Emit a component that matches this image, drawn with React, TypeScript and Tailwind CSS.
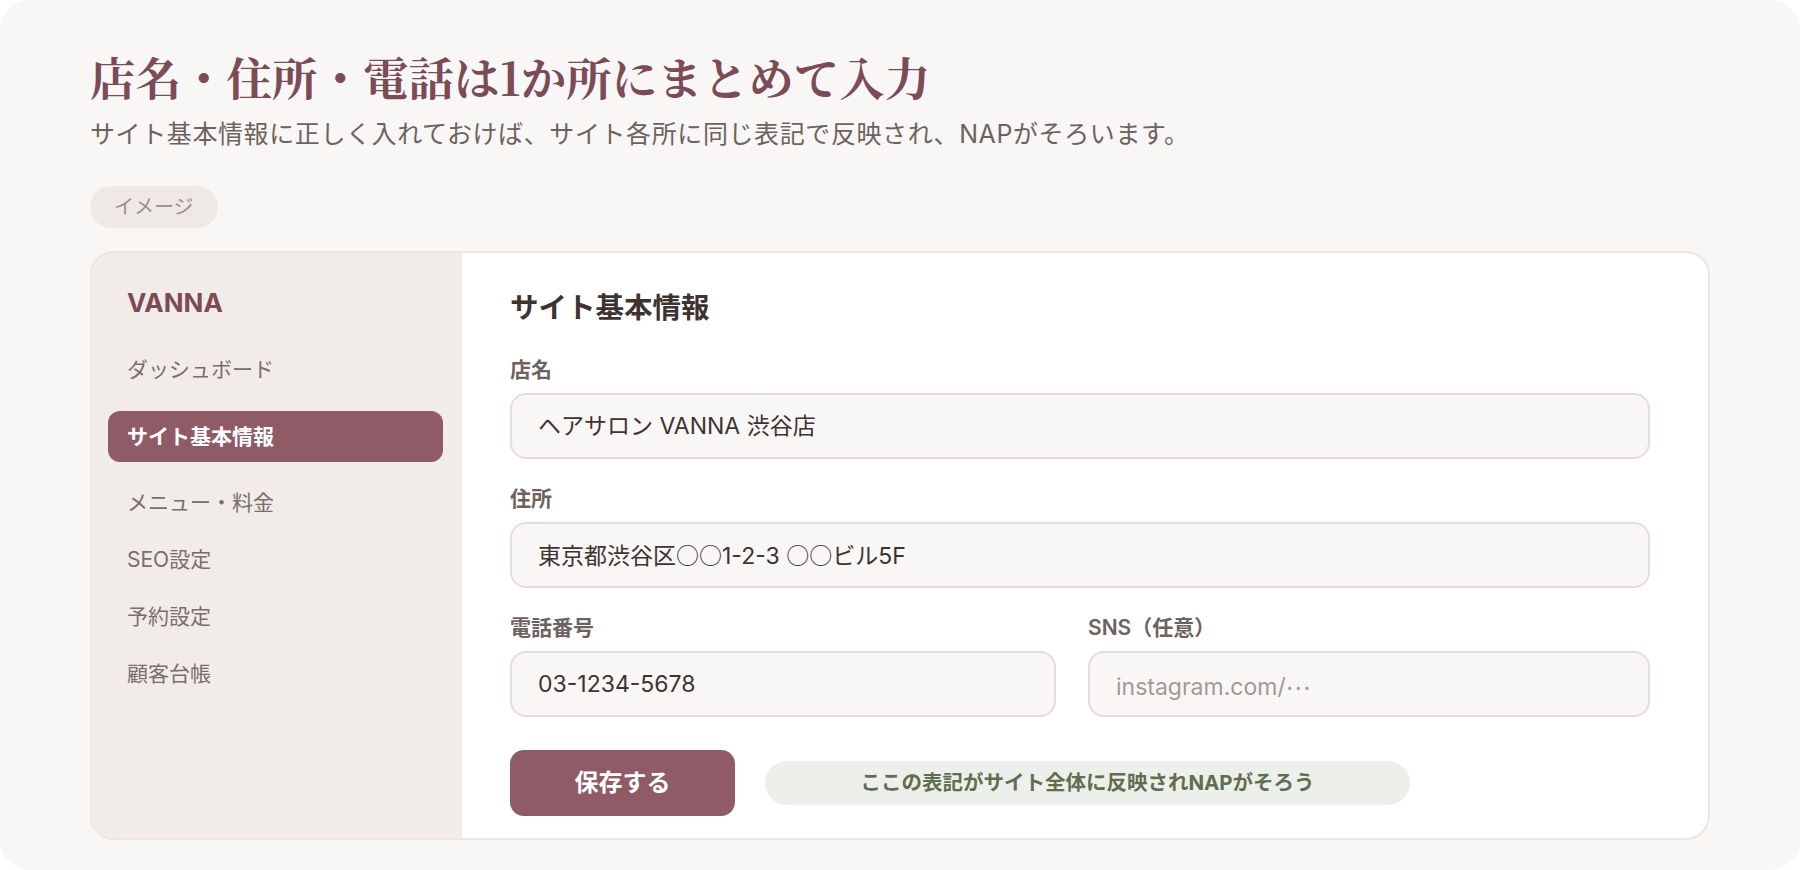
import React from 'react';

const navItems = ['ダッシュボード', 'サイト基本情報', 'メニュー・料金', 'SEO設定', '予約設定', '顧客台帳'];

// kana-font span: keeps ○ and ⋯ in the Japanese face instead of Inter
const Jp = ({ children, className }: { children: React.ReactNode; className?: string }) => (
  <span className={`font-['Noto_Sans_CJK_JP',sans-serif] ${className ?? ''}`}>{children}</span>
);

const Field = ({
  label,
  children,
  muted,
}: {
  label: string;
  children: React.ReactNode;
  muted?: boolean;
}) => {
  return (
    <div className="flex flex-col">
      <div className="text-[21px] leading-[28px] font-semibold text-[#6e625e]">{label}</div>
      <div
        className={
          muted
            ? 'mt-[9px] flex h-[66px] w-full items-center rounded-[16px] border-2 border-[#eadadd] bg-[#f8f7f5] px-[26px] text-[23px] text-[#a39894]'
            : 'mt-[9px] flex h-[66px] w-full items-center rounded-[16px] border-2 border-[#eadadd] bg-[#f8f7f5] px-[26px] text-[23px] text-[#3d3431]'
        }
      >
        <span className="whitespace-pre">{children}</span>
      </div>
    </div>
  );
};

const App = () => {
  return (
    <div className="min-h-screen bg-white font-['Inter','Noto_Sans_CJK_JP',sans-serif]">
      <div className="h-[870px] rounded-[30px] bg-[#f8f7f5] px-[90px] pt-[49px]">
        <h1 className="font-['Noto_Serif_CJK_JP','Noto_Sans_CJK_JP',serif] text-[45.5px] leading-[56px] font-bold text-[#7b4b57]">
          店名・住所・電話は1か所にまとめて入力
        </h1>
        <p className="mt-[11px] text-[25px] leading-[36px] tracking-[0.6px] text-[#6e625e]">
          サイト基本情報に正しく入れておけば、サイト各所に同じ表記で反映され、NAPがそろいます。
        </p>
        <div className="mt-[34px] flex h-[42px] w-fit items-center rounded-full bg-[#efe9e5] px-[24px] text-[20px] text-[#9a8f8a]">
          イメージ
        </div>

        {/* admin preview card */}
        <div className="mt-[23px] flex overflow-hidden rounded-[24px] border-2 border-[#ece5e0] bg-white">
          <div className="w-[370px] shrink-0 bg-[#f1ece8] pt-[33px]">
            <div className="px-[35px] text-[26px] leading-[34px] font-bold text-[#7b4b57]">VANNA</div>
            <div className="mt-[21px] flex flex-col pl-4 pr-[19px]">
              {navItems.map((item, idx) => {
                if (idx === 1) {
                  return (
                    <div
                      key={idx}
                      className="mt-[13px] mb-[12px] flex h-[51px] items-center rounded-[12px] bg-[#8e5b67] px-[19px] text-[21px] font-bold text-white"
                    >
                      {item}
                    </div>
                  );
                }
                return (
                  <div key={idx} className="flex h-[57px] items-center px-[19px] text-[21px] text-[#7a6e69]">
                    {item}
                  </div>
                );
              })}
            </div>
          </div>

          <div className="flex-1 pt-[37px] pr-[58px] pb-[22px] pl-[48px]">
            <h2 className="text-[28.5px] leading-[36px] font-bold text-[#3d3431]">サイト基本情報</h2>
            <div className="mt-[30px] flex flex-col gap-[26px]">
              <Field label="店名">ヘアサロン VANNA 渋谷店</Field>
              <Field label="住所">
                東京都渋谷区<Jp>○○</Jp>1-2-3 <Jp>○○</Jp>ビル5F
              </Field>
              <div className="grid grid-cols-[546px_1fr] gap-[32px]">
                <Field label="電話番号">03-1234-5678</Field>
                <Field label="SNS（任意）" muted>
                  instagram.com/<Jp className="align-[0.22em]">…</Jp>
                </Field>
              </div>
            </div>
            <div className="mt-[33px] flex items-center gap-[30px]">
              <button className="h-[66px] w-[225px] rounded-[14px] bg-[#8e5b67] text-[24px] font-bold text-white">
                保存する
              </button>
              <div className="flex h-[44px] w-[645px] items-center justify-center rounded-full bg-[#edf0ea] text-[20.5px] font-bold text-[#5f6e51]">
                ここの表記がサイト全体に反映されNAPがそろう
              </div>
            </div>
          </div>
        </div>
      </div>
    </div>
  );
};

export default App;
